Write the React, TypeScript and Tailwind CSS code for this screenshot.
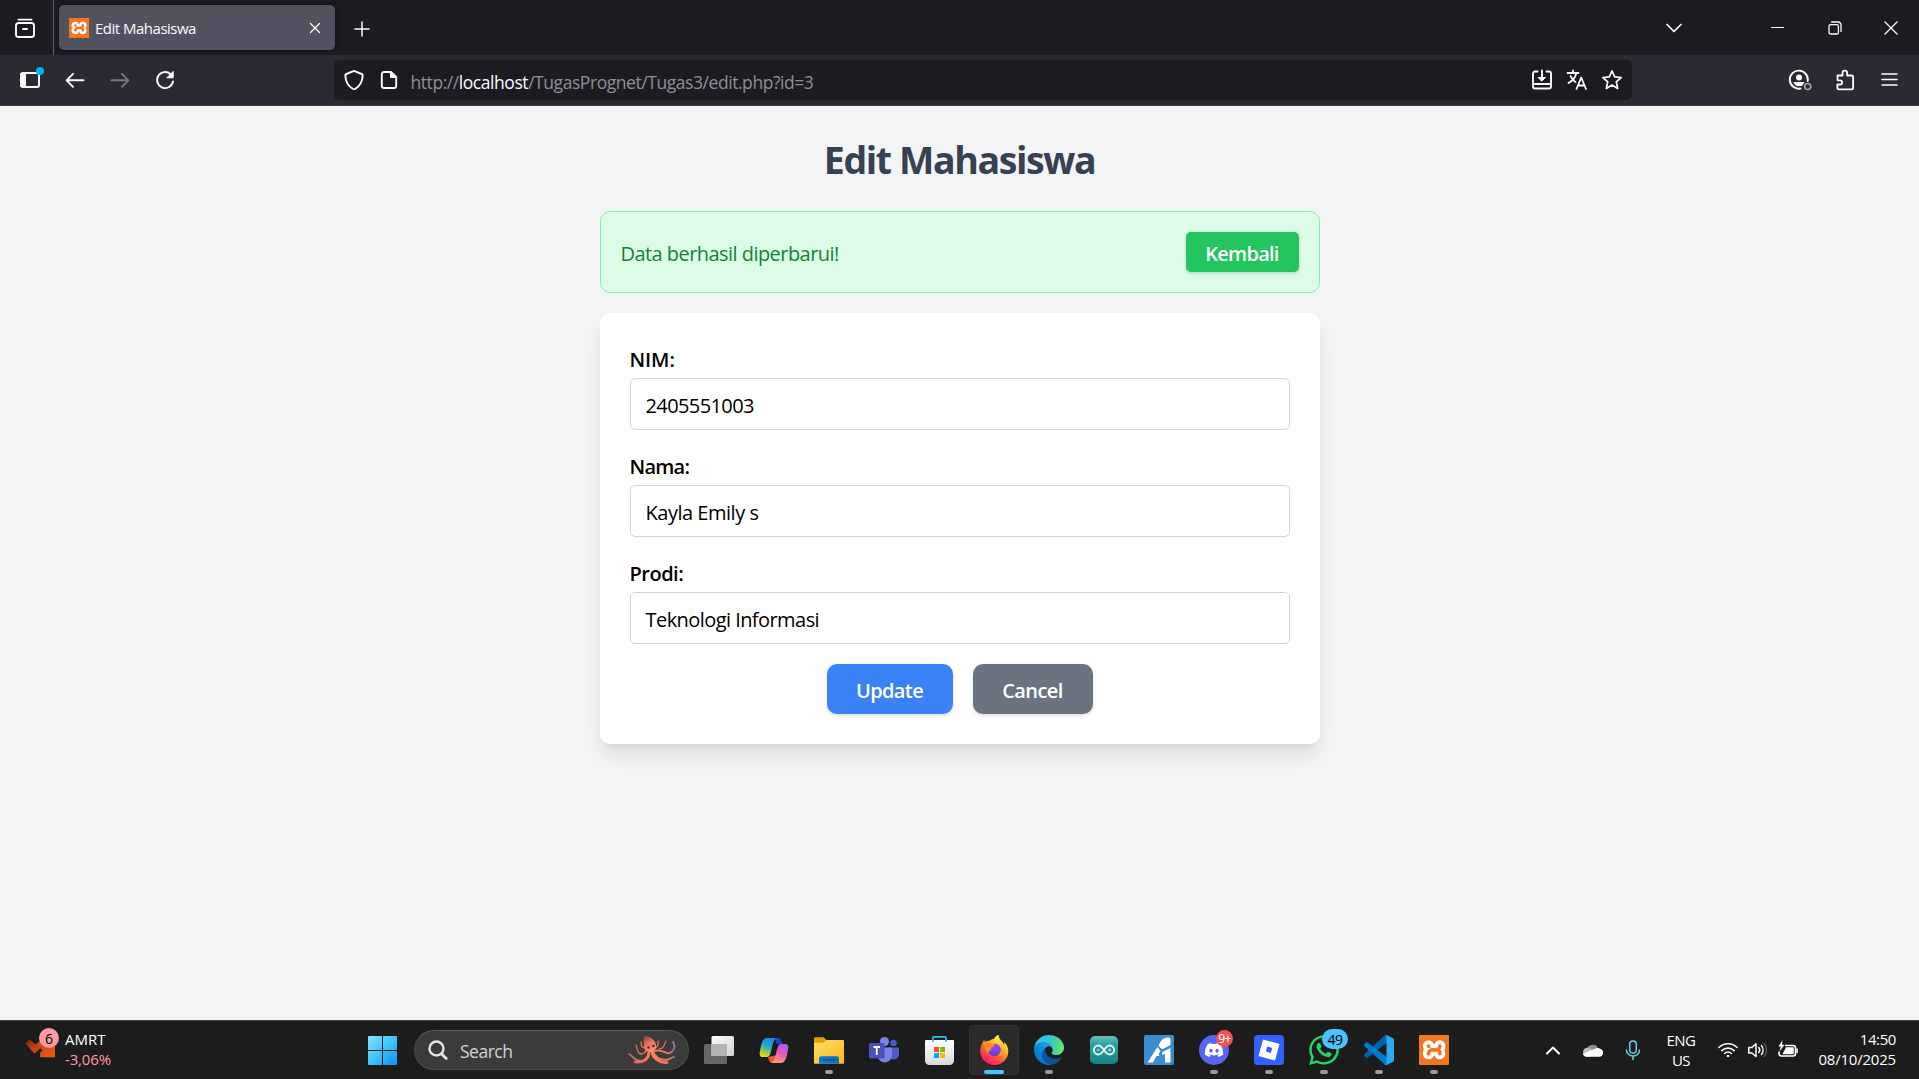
import React from "react";
import { FaDiscord, FaWhatsapp } from "react-icons/fa";
import { SiXampp } from "react-icons/si";

type Kids = { children?: React.ReactNode };

function Line({ children, s = 20, w = 1.5, className = "text-[#fbfbfe]" }: Kids & { s?: number; w?: number; className?: string }) {
  return (
    <svg width={s} height={s} viewBox={`0 0 ${s} ${s}`} fill="none" stroke="currentColor" strokeWidth={w} strokeLinecap="round" strokeLinejoin="round" className={className}>
      {children}
    </svg>
  );
}

function Xampp({ className }: { className: string }) {
  return (
    <span className={"flex items-center justify-center bg-white rounded-[2px] overflow-hidden " + className}>
      <SiXampp className="w-full h-full scale-[1.03] text-[#f37623]" />
    </span>
  );
}

function TabStrip() {
  return (
    <div className="flex h-[55px] items-center bg-[#1c1b22]">
      <div className="flex w-[50px] justify-center pt-[2px]">
        <Line s={22} w={1.9}>
          <path d="M4.5 1.6h13" />
          <rect x="2" y="5" width="18" height="14" rx="2.6" />
          <path d="M9 11h4" />
        </Line>
      </div>
      <div className="ml-[3px] h-full w-px bg-[#5b5b66]" />
      <div className="ml-[5px] flex h-[45px] w-[276px] items-center rounded-[5px] bg-[#52525e] pl-[10px] pr-[14px] shadow-[0_0_4px_rgba(0,0,0,0.5)]">
        <Xampp className="h-[20px] w-[20px]" />
        <span className="ml-[6px] pt-px text-[15px] tracking-[-0.5px] text-[#fbfbfe]">Edit Mahasiswa</span>
        <Line s={12} w={1.3} className="ml-auto text-[#fbfbfe]">
          <path d="M1.5 1.5l9 9M10.5 1.5l-9 9" />
        </Line>
      </div>
      <div className="ml-[18.5px] pt-[2px]">
        <Line s={16} w={1.5}>
          <path d="M8 1v14M1 8h14" />
        </Line>
      </div>
      <div className="ml-auto flex items-center">
        <div className="flex w-[40px] justify-center">
          <Line s={18} w={1.7}>
            <path d="M2 5.5l7 7 7-7" />
          </Line>
        </div>
        <div className="ml-[55px] flex w-[57px] justify-center">
          <Line s={13} w={1.2}>
            <path d="M0.5 6.5h12" />
          </Line>
        </div>
        <div className="flex w-[57px] justify-center">
          <Line s={14} w={1.3}>
            <rect x="1" y="3.6" width="9.4" height="9.4" rx="1.6" />
            <path d="M3.6 1h6.2a3.2 3.2 0 0 1 3.2 3.2v6.2" />
          </Line>
        </div>
        <div className="flex w-[56px] justify-center">
          <Line s={14} w={1.3}>
            <path d="M1 1l12 12M13 1L1 13" />
          </Line>
        </div>
      </div>
    </div>
  );
}

function Cell({ children, className }: Kids & { className: string }) {
  return <div className={"flex shrink-0 items-center justify-center " + className}>{children}</div>;
}

function Toolbar() {
  return (
    <div className="flex h-[51px] items-center border-b border-[#3a3942] bg-[#2b2a33] pl-[7.5px] pr-[6.5px]">
      <Cell className="relative w-[45px]">
        <Line s={22} w={1.9}>
          <rect x="2" y="4" width="18" height="14" rx="2" />
          <path d="M2 5h4v12H2z" fill="currentColor" />
        </Line>
        <span className="absolute left-[28.5px] top-[-2.5px] h-[8px] w-[8px] rounded-full bg-[#00b3f4]" />
      </Cell>
      <Cell className="w-[45px]">
        <Line w={1.9}>
          <path d="M18.5 10.3H2M8 3.8L1.6 10.3 8 16.8" />
        </Line>
      </Cell>
      <Cell className="w-[45px]">
        <Line w={1.9} className="text-[#77767e]">
          <path d="M1.5 10.3H18M12 3.8l6.4 6.5-6.4 6.5" />
        </Line>
      </Cell>
      <Cell className="w-[45px]">
        <Line w={1.9}>
          <path d="M18 11.5A8 8 0 1 1 15.6 4.2" />
          <path d="M18.2 1.8v6h-6z" fill="currentColor" strokeWidth="1" />
        </Line>
      </Cell>
      <div className="ml-[146.5px] flex h-[40px] w-[1298px] items-center rounded-[5px] bg-[#1c1b22] px-[2.5px]">
        <Cell className="w-[35px]">
          <Line s={22} w={1.9}>
            <path d="M11 1.900L18.600 5c1 .4 1.200.8 1.100 1.800-.4 6.200-2.800 10.400-7.500 13a2.400 2.400 0 0 1-2.400 0C5.100 17.200 2.700 13 2.300 6.800c-.1-1 .1-1.400 1.100-1.800z" />
          </Line>
        </Cell>
        <Cell className="w-[35px]">
          <Line w={1.9}>
            <path d="M12 2H5a2.200 2.200 0 0 0-2.200 2.200v11.600A2.200 2.200 0 0 0 5 18h10a2.200 2.200 0 0 0 2.200-2.200V7z" />
            <path d="M11.500 2v5.500h5.700z" fill="currentColor" strokeWidth="1" />
          </Line>
        </Cell>
        <span className="ml-[4px] pt-[4.5px] text-[17.5px] tracking-[-0.44px] text-[#8f8f95]">
          http://<span className="text-[#fbfbfe]">localhost</span>/TugasPrognet/Tugas3/edit.php?id=3
        </span>
        <div className="ml-auto flex">
          <Cell className="w-[35px]">
            <Line s={22} w={1.9}>
              <path d="M6.500 2.500H4A2 2 0 0 0 2 4.500v13A2 2 0 0 0 4 19.500h14a2 2 0 0 0 2-2v-13a2 2 0 0 0-2-2h-2.500M2 15h18M11 1.500v8" />
              <path d="M7.500 8.500h7L11 12z" fill="currentColor" strokeWidth="1" />
            </Line>
          </Cell>
          <Cell className="w-[35px]">
            <Line s={22} w={1.8}>
              <path d="M1.500 4h11M7 1.500V4M10.300 4C9.500 8 6.500 12 2.500 14M4.500 7c1 2.600 2.800 4.600 5 6" />
              <path d="M10.500 20l4.700-11.500L20 20M12 16.500h6.400" />
            </Line>
          </Cell>
          <Cell className="w-[35px]">
            <Line s={22} w={1.7}>
              <path d="M11 1.800l2.700 6 6.400.7-4.800 4.400 1.400 6.500L11 16.100l-5.700 3.300 1.400-6.500L1.900 8.500l6.400-.7z" />
            </Line>
          </Cell>
        </div>
      </div>
      <div className="ml-auto flex">
        <Cell className="w-[45px]">
          <Line s={24} w={1.9}>
            <path d="M19.700 13A9 9 0 1 0 12.500 20.500" />
            <circle cx="11" cy="9.500" r="3" fill="currentColor" stroke="none" />
            <path d="M5.500 14h11l-1.500 2.500-1 1.500H9c-1.600-.4-3-2-3.500-4z" fill="currentColor" stroke="none" />
            <circle cx="19.700" cy="18.500" r="3" stroke="#a5a5ab" strokeWidth="1.600" />
          </Line>
        </Cell>
        <Cell className="w-[45px]">
          <Line s={22} w={1.8}>
            <path d="M3.500 6.500h5V4a2.300 2.300 0 0 1 4.600 0v2.500h4.400a1.600 1.600 0 0 1 1.600 1.600v10.700a1.600 1.600 0 0 1-1.600 1.600H5a1.600 1.600 0 0 1-1.600-1.600V15.500H6a2 2 0 0 0 0-4.200H3.500z" />
          </Line>
        </Cell>
        <Cell className="w-[45px]">
          <Line w={1.5}>
            <path d="M2 4h15M2 9.500h15M2 15h15" />
          </Line>
        </Cell>
      </div>
    </div>
  );
}

const fields = [
  { label: "NIM:", value: "2405551003", l: "tracking-[-0.1px]", v: "tracking-[-0.6px]" },
  { label: "Nama:", value: "Kayla Emily s", l: "tracking-[-0.75px]", v: "tracking-[-0.48px]" },
  { label: "Prodi:", value: "Teknologi Informasi", l: "tracking-[-0.5px]", v: "tracking-[-0.56px]" },
];

function Page() {
  return (
    <main className="flex-1 bg-[#f3f4f6] pt-[30px] text-[20px]">
      <h1 className="h-[45px] pt-px text-center text-[37.5px] font-bold leading-[45px] tracking-[-1.4px] text-[#374151]">Edit Mahasiswa</h1>
      <div className="mx-auto mt-[30px] flex h-[82px] w-[720px] items-center justify-between rounded-[10px] border border-[#86efac] bg-[#dcfce7] px-[20px]">
        <span className="pt-[4px] tracking-[-0.55px] text-[#15803d]">Data berhasil diperbarui!</span>
        <button className="h-[40px] w-[113px] rounded-[5px] bg-[#22c55e] pt-[4px] font-semibold tracking-[-0.75px] text-white shadow-[0_1.25px_3.75px_rgba(0,0,0,0.1),0_1.25px_2.5px_-1.25px_rgba(0,0,0,0.1)]">Kembali</button>
      </div>
      <form className="mx-auto mt-[20px] h-[431px] w-[720px] rounded-[10px] bg-white p-[30px] shadow-[0_12.5px_18.75px_-3.75px_rgba(0,0,0,0.1),0_5px_7.5px_-5px_rgba(0,0,0,0.1)]">
        {fields.map((f) => (
          <div key={f.label} className="mb-[20px]">
            <div className={"h-[35px] pt-[2px] font-semibold leading-[30px] text-black " + f.l}>{f.label}</div>
            <div className={"flex h-[52px] items-center rounded-[5px] border border-[#d1d5db] px-[15px] pt-[4px] text-black " + f.v}>{f.value}</div>
          </div>
        ))}
        <div className="flex justify-center gap-[20px] text-white">
          <div className="h-[50px] w-[126px] rounded-[10px] bg-[#3b82f6] pt-[2px] text-center font-semibold leading-[50px] tracking-[-0.6px] shadow-[0_1.25px_3.75px_rgba(0,0,0,0.1),0_1.25px_2.5px_-1.25px_rgba(0,0,0,0.1)]">Update</div>
          <div className="h-[50px] w-[120px] rounded-[10px] bg-[#6b7280] pt-[2px] text-center font-semibold leading-[50px] tracking-[-0.6px] shadow-[0_1.25px_3.75px_rgba(0,0,0,0.1),0_1.25px_2.5px_-1.25px_rgba(0,0,0,0.1)]">Cancel</div>
        </div>
      </form>
    </main>
  );
}

function Octopus() {
  return (
    <svg width="50" height="30" viewBox="0 0 50 30" fill="none" strokeLinecap="round">
      <defs>
        <linearGradient id="oc" x1="0" x2="50" y1="0" y2="0" gradientUnits="userSpaceOnUse">
          <stop offset="0" stopColor="#7d6a9a" /><stop offset=".22" stopColor="#e2735c" /><stop offset=".5" stopColor="#ff8258" /><stop offset=".82" stopColor="#e8705e" /><stop offset="1" stopColor="#5b76b4" />
        </linearGradient>
        <linearGradient id="oh" x1="17" x2="26" y1="1" y2="16" gradientUnits="userSpaceOnUse">
          <stop offset="0" stopColor="#7b3f4e" /><stop offset=".5" stopColor="#e8735a" /><stop offset="1" stopColor="#ff9468" />
        </linearGradient>
      </defs>
      <g stroke="url(#oc)">
        <path d="M22 17c-1 7-6 10-11 8.500-4-1-5-4-9-6.500" strokeWidth="2" />
        <path d="M22 17c0 7-5 11-14 10" strokeWidth="2.600" />
        <path d="M20 15c-3 4-6 5-8 3s-2-5-3-8" strokeWidth="1.300" />
        <path d="M18 13c-3 0-4-2-4-6" strokeWidth="1.200" />
        <path d="M26 16c2 7 8 9 13 9 4 0 5-3 8-3" strokeWidth="2" />
        <path d="M25 17c1 6 7 11 15 10.500" strokeWidth="2.800" />
        <path d="M28 16c6-3 11 4 15 2s6-7 3-11" strokeWidth="1.900" />
        <path d="M27 13c3 0 5-3 4-7M32 14c4 0 5-3 7-8" strokeWidth="1.100" />
      </g>
      <path d="M17 0.500c5 .5 11 4 12 9 .7 4-1 7-5 7.500-4 .4-7-2-7-6 0-3-1-6 0-10.500z" fill="url(#oh)" />
      <circle cx="21.500" cy="12.500" r="1.200" fill="#3c2540" /><circle cx="26.500" cy="11" r="1.200" fill="#3c2540" />
    </svg>
  );
}

const TaskView = () => (
  <svg width="30" height="28" viewBox="0 0 30 28">
    <defs><linearGradient id="tv" x2="1" y2="1"><stop stopColor="#fff" /><stop offset="1" stopColor="#d0d0d0" /></linearGradient></defs>
    <rect x="0" y="8" width="23" height="20" rx="1.500" fill="#666" />
    <rect x="7.500" y="0" width="22.500" height="20" rx="1.500" fill="url(#tv)" />
    <path d="M7.500 8H23v12H7.500z" fill="#b4b4b4" />
  </svg>
);

const Copilot = () => (
  <svg width="30" height="27" viewBox="0 0 30 27">
    <defs>
      <linearGradient id="cp1" x1=".6" x2=".2" y1="0" y2="1"><stop stopColor="#1d86ec" /><stop offset=".45" stopColor="#22b0c8" /><stop offset=".75" stopColor="#9ccf3a" /><stop offset="1" stopColor="#ffd21c" /></linearGradient>
      <linearGradient id="cp2" x1=".7" x2=".3" y1="0" y2="1"><stop stopColor="#a55cf0" /><stop offset=".5" stopColor="#e85cb0" /><stop offset="1" stopColor="#ffa06c" /></linearGradient>
    </defs>
    <path d="M9 20c1 4 2 6 5 6h6c-3-1-3-4-2-8z" fill="#f0563c" />
    <path d="M16 1h3c3 0 3.500 3 4.500 6h-6z" fill="#1947c4" />
    <path d="M8 1h10c-3 1-4 5-5 9-1 5-2 10-5 10H4c-3 0-4-2-3-6 1-5 2-13 7-13z" fill="url(#cp1)" />
    <path d="M22 26H12c3-1 4-5 5-9 1-5 2-10 5-10h4c3 0 4 2 3 6-1 5-2 13-7 13z" fill="url(#cp2)" />
  </svg>
);

const Folder = () => (
  <svg width="30" height="27" viewBox="0 0 30 27">
    <defs><linearGradient id="fo" x2="1" y2="1"><stop stopColor="#ffdc6c" /><stop offset="1" stopColor="#fbb917" /></linearGradient><linearGradient id="fb" x2="1" y2="0"><stop stopColor="#0f7bd4" /><stop offset="1" stopColor="#1a66b8" /></linearGradient></defs>
    <path d="M0 1.500Q0 .3 1.200.3H9.500L13 3.500V9H0z" fill="#e2a100" />
    <path d="M0 5.800h9L12.500 3H29q1 0 1 1v22q0 .8-1 .8H1q-1 0-1-1z" fill="url(#fo)" />
    <path d="M5 26.800V21.500q0-2.300 2.300-2.300h15.400q2.300 0 2.300 2.300v5.300z" fill="url(#fb)" />
    <path d="M9 22.900h12" stroke="#0b4a8c" strokeWidth="1.200" strokeLinecap="round" />
  </svg>
);

const Teams = () => (
  <svg width="30" height="27" viewBox="0 0 30 27">
    <circle cx="24.500" cy="6" r="3.200" fill="#5059c9" /><circle cx="15.500" cy="4.500" r="4.500" fill="#7b83eb" />
    <path d="M20 10.500h9q1 0 1 1V17a5.500 5.500 0 0 1-8 5z" fill="#5059c9" />
    <path d="M9 10.500h13q1 0 1 1V19a7.300 7.300 0 0 1-14.500 0z" fill="#7b83eb" />
    <rect x="0" y="6" width="15.500" height="15.500" rx="1.500" fill="#4a52ba" />
    <path d="M4.500 10h6.500M7.750 10v8" stroke="#fff" strokeWidth="1.800" />
  </svg>
);

const Store = () => (
  <svg width="29" height="29" viewBox="0 0 29 29">
    <defs><linearGradient id="st" x2="0" y2="1"><stop stopColor="#fff" /><stop offset="1" stopColor="#d9d9d9" /></linearGradient></defs>
    <path d="M0 5q0-1 1-1h27q1 0 1 1v19.500a4.500 4.500 0 0 1-4.500 4.500h-20A4.500 4.500 0 0 1 0 24.500z" fill="url(#st)" />
    <path d="M7.900 6V1.900q0-1 1-1h11.200q1 0 1 1V6" fill="none" stroke="#2cc0f2" strokeWidth="1.700" />
    <path d="M9 11h5v5H9z" fill="#f25022" /><path d="M15 11h5v5h-5z" fill="#7fba00" /><path d="M9 17h5v5H9z" fill="#00a4ef" /><path d="M15 17h5v5h-5z" fill="#ffb900" />
  </svg>
);

const Firefox = () => (
  <svg width="29" height="30" viewBox="0 0 29 30">
    <defs>
      <linearGradient id="ff" x1=".8" x2=".2" y1=".05" y2="1"><stop stopColor="#fff04a" /><stop offset=".35" stopColor="#ffb02a" /><stop offset=".62" stopColor="#ff5a38" /><stop offset=".85" stopColor="#ff2260" /><stop offset="1" stopColor="#e31587" /></linearGradient>
      <radialGradient id="fp" cx=".5" cy=".3" r=".7"><stop stopColor="#a346f2" /><stop offset="1" stopColor="#5b3fd0" /></radialGradient>
      <linearGradient id="fy" x2="0" y2="1"><stop stopColor="#fff44f" /><stop offset="1" stopColor="#ff8a1c" /></linearGradient>
    </defs>
    <path d="M3 7c.3-1 .8-1.800 1.400-2.300 0 1 .3 1.800.6 2.300 1.500-1 3-1.400 4.500-1.200C11 4.500 12 4 14 4c1-2 2.500-3.400 4.500-4 0 3.500 2 5 4 7 .5 1 1.200 2 1.400 3 .5-1 .5-2 .2-3.200 3 3 4.400 6.500 4.200 10A14 14 0 0 1 .3 15.500C.3 12.500 1.400 9.500 3 7z" fill="url(#ff)" />
    <circle cx="14.500" cy="15" r="6.300" fill="url(#fp)" />
    <path d="M5 8c2-1.500 4.500-1 6 .8 1.500.2 3 .3 3.800 1-.3 1.700-2.800 2.200-3.600 3-.4.700.2 2 .2 2.700-2.200-.8-3 .7-2.300 2.600-2.600-1-4.800-4.600-4.100-10.100z" fill="#ff8a2a" />
    <path d="M18.500 0c0 3.500 2 5 4 7.500 2.500 3 2.500 8 0 11-1.300 1.500-3.400 2.300-5 2 4-2.500 4.500-7 2.400-9.800C18.500 9 15.500 8.500 14 4c1-2 2.500-3.400 4.500-4z" fill="url(#fy)" opacity=".85" />
  </svg>
);

const Edge = () => (
  <svg width="30" height="30" viewBox="0 0 256 256">
    <defs>
      <linearGradient id="e1" x1="63" x2="241" y1="177" y2="177" gradientUnits="userSpaceOnUse"><stop stopColor="#0c59a4" /><stop offset="1" stopColor="#114a8b" /></linearGradient>
      <linearGradient id="e2" x1="157" x2="46" y1="100" y2="221" gradientUnits="userSpaceOnUse"><stop stopColor="#1b9de2" /><stop offset=".3" stopColor="#1595df" /><stop offset=".7" stopColor="#0680d7" /><stop offset="1" stopColor="#0078d4" /></linearGradient>
      <linearGradient id="e3" x1="20" x2="250" y1="60" y2="110" gradientUnits="userSpaceOnUse"><stop stopColor="#35c1f1" /><stop offset=".4" stopColor="#2fc5dc" /><stop offset=".75" stopColor="#4ad68f" /><stop offset="1" stopColor="#66eb6e" /></linearGradient>
    </defs>
    <path fill="url(#e1)" d="M231.070 190.540c-3.380 1.770-6.910 3.330-10.530 4.670-11.500 4.300-23.670 6.510-35.960 6.480-47.370 0-88.630-32.550-88.630-74.420.12-11.420 6.400-21.890 16.400-27.380-42.850 1.800-53.860 46.450-53.860 72.600 0 74.060 68.150 81.500 82.860 81.500 7.900 0 19.850-2.300 27.080-4.600l1.270-.4a128.390 128.390 0 0 0 66.580-52.650 4.100 4.100 0 0 0-5.210-5.800z" />
    <path fill="url(#e2)" d="M105.730 241.420a79.200 79.200 0 0 1-22.720-21.320 80.720 80.720 0 0 1 29.500-120.210c3.120-1.470 8.460-4.120 15.580-4a32.350 32.350 0 0 1 25.660 13 31.920 31.920 0 0 1 6.360 18.690c0-.2 24.450-79.610-80.180-79.610-43.900 0-80 41.660-80 78.210-.1 19.340 4.080 38.500 12.310 56 27.600 58.760 94.700 87.600 156.300 67.240a75.950 75.950 0 0 1-62.810-8z" />
    <path fill="url(#e3)" d="M152.320 148.860c-.82 1.050-3.320 2.500-3.320 5.660 0 2.610 1.700 5.120 4.720 7.230 14.380 10 41.490 8.680 41.560 8.680a59.550 59.550 0 0 0 30.270-8.350 61.380 61.380 0 0 0 30.430-52.880c.26-22.410-8-37.310-11.340-43.910C223.400 23.880 177.720 0 128 0A128 128 0 0 0 0 126.200c.48-36.540 36.800-66.050 80-66.050 3.500 0 23.460.34 42 10.070 16.340 8.580 24.900 18.940 30.850 29.210 6.180 10.670 7.280 24.150 7.280 29.520 0 5.370-2.740 13.330-7.810 19.910z" />
  </svg>
);

const Arduino = () => (
  <svg width="28" height="28" viewBox="0 0 28 28" fill="none">
    <defs><linearGradient id="ar" x2="0" y2="1"><stop stopColor="#6cc0c0" /><stop offset=".3" stopColor="#2a9fa3" /><stop offset="1" stopColor="#148487" /></linearGradient></defs>
    <rect width="28" height="28" rx="5" fill="url(#ar)" />
    <path d="M14 14c-2-3-3.500-4.500-5.700-4.500a4.500 4.500 0 0 0 0 9c2.200 0 3.700-1.500 5.700-4.500s3.500-4.500 5.700-4.500a4.500 4.500 0 0 1 0 9C17.500 18.500 16 17 14 14z" stroke="#e6f4f4" strokeWidth="1.800" />
    <path d="M7 14h2.600M18.400 14H21M19.700 12.700v2.600" stroke="#e6f4f4" strokeWidth="1" />
  </svg>
);

const BlueA = () => (
  <svg width="30" height="30" viewBox="0 0 30 30">
    <rect width="30" height="30" rx="2" fill="#3b8bd0" />
    <path d="M17 6q3-4 8-3.500 1.500.3 1.500 2v5.500L20 13.500q-2 1-3.500-.5L14.500 10.500z" fill="#fff" />
    <path d="M13.500 12l3 4-2 3.500 1 1.500h-3L9 27.500H3.500z" fill="#fff" />
    <path d="M26.500 13v14.500h-5.500V19l-3 1 .5-3z" fill="#fff" />
  </svg>
);

const Roblox = () => (
  <svg width="30" height="30" viewBox="0 0 30 30">
    <rect width="30" height="30" rx="3.500" fill="#335fff" />
    <path d="M9 4.500l16.500 4.400L21 25.500 4.500 21zM13.200 11.600l-1.300 5 5 1.300 1.300-5z" fill="#fff" fillRule="evenodd" />
  </svg>
);

const VSCode = () => (
  <svg width="30" height="30" viewBox="0 0 100 100">
    <path fill="#0065A9" d="M96.461 10.796L75.857.876C73.472-.273 70.622.212 68.750 2.083L1.299 63.583c-1.815 1.654-1.813 4.511.004 6.162l5.510 5.009c1.485 1.350 3.722 1.450 5.321.237L93.361 13.370C96.086 11.303 100 13.246 100 16.667v-.24c0-2.400-1.375-4.589-3.539-5.631z" />
    <path fill="#007ACC" d="M96.461 89.204L75.857 99.125c-2.385 1.148-5.235.663-7.107-1.208L1.299 36.417c-1.815-1.654-1.813-4.511.004-6.162l5.510-5.009c1.485-1.350 3.722-1.450 5.321-.237L93.361 86.630C96.086 88.697 100 86.754 100 83.333v.24c0 2.400-1.375 4.589-3.539 5.631z" />
    <path fill="#29aaf5" d="M75.858 99.126c-2.386 1.148-5.236.662-7.108-1.209C71.056 100.223 75 98.590 75 95.328V4.672C75 1.410 71.056-.223 68.750 2.083 70.622.211 73.472-.274 75.858.874l20.601 9.907C98.623 11.822 100 14.011 100 16.413v67.174c0 2.402-1.377 4.592-3.541 5.633z" />
  </svg>
);

function TaskButton({ children, active, running }: Kids & { active?: boolean; running?: boolean }) {
  return (
    <div className="flex h-full w-[55px] items-center justify-center">
      <div className={"relative flex h-[50px] w-[50px] items-center justify-center rounded-[5px] " + (active ? "bg-[#2a2a2a] ring-1 ring-inset ring-[#333333]" : "")}>
        {children}
        {active && <span className="absolute bottom-[1px] left-[15px] h-[4px] w-[20px] rounded-full bg-[#4cc2ff]" />}
        {running && <span className="absolute bottom-[1px] left-[21px] h-[4px] w-[8px] rounded-full bg-[#9a9a9a]" />}
      </div>
    </div>
  );
}

function Taskbar() {
  return (
    <div className="flex h-[59px] items-center border-t border-[#3c4245] bg-[#1c1c1c] text-[15px] text-white">
      <div className="flex w-[355px] items-center pl-[25px]">
        <div className="relative h-[40px] w-[32px]">
          <svg width="32" height="40" viewBox="0 0 32 40">
            <defs><linearGradient id="wd" x1="0" x2="1" y1="0" y2=".6"><stop stopColor="#7c1d12" /><stop offset=".4" stopColor="#c8401a" /><stop offset="1" stopColor="#e85a10" /></linearGradient></defs>
            <path d="M.5 13.500l4-4 6 5 6-5 8 7 5.500-5v14.800q0 1-1 1H16q-1 0-1-1v-3.500l2.500-2.500-2.500-2-5.500 5.500z" fill="url(#wd)" />
          </svg>
          <span className="absolute left-[14px] top-[-2px] flex h-[20px] w-[20px] items-center justify-center rounded-full bg-[#ff99a4] text-[14px] text-black">6</span>
        </div>
        <div className="ml-[8px] pb-[2px] leading-[20px]">
          <div>AMRT</div>
          <div className="tracking-[-0.14px] text-[#ff99a4]">-3,06%</div>
        </div>
      </div>
      <Cell className="w-[55px]">
        <svg width="29" height="29" viewBox="0 0 29 29">
          <defs><linearGradient id="wn" x1="0" y1="0" x2="29" y2="29" gradientUnits="userSpaceOnUse"><stop stopColor="#8be0ff" /><stop offset=".5" stopColor="#40c4fb" /><stop offset="1" stopColor="#0a8cf5" /></linearGradient></defs>
          <path d="M0 1q0-1 1-1h13v14H0zM15 0h13q1 0 1 1v13H15zM0 15h14v14H1q-1 0-1-1zM15 15h14v13q0 1-1 1H15z" fill="url(#wn)" />
        </svg>
      </Cell>
      <div className="ml-[4px] mr-[2.5px] flex h-[40px] w-[275px] items-center rounded-full border border-[#4a4a4a] border-t-[#5c5c5c] bg-[#3b3b3b] pl-[13px] pr-[11px]">
        <Line w={2.4} className="text-[#e3e3e3]">
          <circle cx="8.500" cy="8.500" r="7" />
          <path d="M13.700 14l4.500 4.500" strokeWidth="2.800" />
        </Line>
        <span className="ml-[12px] pt-[2px] text-[17.5px] tracking-[-0.5px] text-[#d2d2d2]">Search</span>
        <div className="ml-auto"><Octopus /></div>
      </div>
      <TaskButton><TaskView /></TaskButton>
      <TaskButton><Copilot /></TaskButton>
      <TaskButton running><Folder /></TaskButton>
      <TaskButton><Teams /></TaskButton>
      <TaskButton><Store /></TaskButton>
      <TaskButton active><Firefox /></TaskButton>
      <TaskButton running><Edge /></TaskButton>
      <TaskButton><Arduino /></TaskButton>
      <TaskButton><BlueA /></TaskButton>
      <TaskButton running>
        <span className="flex h-[30px] w-[30px] items-center justify-center rounded-full bg-[#5865f2]"><FaDiscord className="h-[20px] w-[20px]" /></span>
        <span className="absolute left-[27px] top-[5px] flex h-[17px] w-[17px] items-center justify-center rounded-full bg-[#f05252] text-[12px] tracking-[-0.5px]">9+</span>
      </TaskButton>
      <TaskButton running><Roblox /></TaskButton>
      <TaskButton running>
        <FaWhatsapp className="h-[34px] w-[34px] text-[#25d366]" />
        <span className="absolute left-[23px] top-[4px] flex h-[20px] w-[26px] items-center justify-center rounded-full bg-[#4cc2ff] text-[14px] tracking-[-0.5px] text-black">49</span>
      </TaskButton>
      <TaskButton running><VSCode /></TaskButton>
      <TaskButton running><Xampp className="h-[30px] w-[30px]" /></TaskButton>
      <div className="ml-auto flex items-center pr-[23px]">
        <Cell className="w-[40px]">
          <Line s={18} w={2}><path d="M3 12.500l6-6 6 6" /></Line>
        </Cell>
        <Cell className="w-[40px]">
          <svg width="20" height="13" viewBox="0 0 20 13">
            <path d="M4 5a6 6 0 0 1 11-1l-3 5z" fill="#8c8c8c" />
            <path d="M4.500 12.800A4.300 4.300 0 0 1 4.500 3.800c2 0 3 .6 4 1.500l8 6z" fill="#bdbdbd" />
            <path d="M3 12.800c-2-.5-3-1.800-3-3l13-5.500c1.500-.6 3.500-.5 4 .5 2 .3 3 2 3 4a4 4 0 0 1-4 4z" fill="#fff" />
          </svg>
        </Cell>
        <Cell className="w-[40px]">
          <Line s={20} w={1.5} className="text-[#76cde4]">
            <rect x="6.700" y="1" width="6.600" height="12" rx="3.300" />
            <path d="M3.500 10a6.500 6 0 0 0 13 0M10 16v3.500" />
          </Line>
        </Cell>
        <div className="w-[56px] text-center leading-[20px]">
          <div className="tracking-[-0.5px]">ENG</div>
          <div className="tracking-[-0.5px]">US</div>
        </div>
        <Cell className="ml-[4px] w-[30px]">
          <Line w={1.6}>
            <path d="M.9 7.500a13 13 0 0 1 18.200 0M3.800 10.600a9 9 0 0 1 12.400 0M6.600 13.500a5 5 0 0 1 6.800 0" />
            <circle cx="10" cy="16" r="1.300" fill="currentColor" stroke="none" />
          </Line>
        </Cell>
        <Cell className="w-[30px]">
          <Line w={1.500}>
            <path d="M.8 7.500h3L8 3.800v12.700L3.800 13h-3z" />
            <path d="M10.800 7.500a4 4 0 0 1 0 5M13.400 5.500a7 7 0 0 1 0 9" />
            <path d="M16.200 3.500a10 10 0 0 1 0 13" stroke="#555" />
          </Line>
        </Cell>
        <Cell className="w-[30px]">
          <svg width="20" height="20" viewBox="0 0 20 20">
            <path d="M7 5.500h8a2.500 2.500 0 0 1 2.500 2.500v5.500a2.500 2.500 0 0 1-2.500 2.500H3.500A2.500 2.500 0 0 1 1 13.500v-2" fill="none" stroke="#fff" strokeWidth="1.600" />
            <path d="M18.300 8.500h1.500v4.500h-1.500zM8 7.300h6.500q1.300 0 1.300 1.300v4.300q0 1.300-1.300 1.300H4.500z" fill="#fff" />
            <path d="M4.500 0L.5 6.500h2.300L1.500 11.500 6.500 4.800H4z" fill="#fff" />
          </svg>
        </Cell>
        <div className="w-[93px] pb-[2px] text-right leading-[20px]">
          <div className="tracking-[-0.4px]">14:50</div>
          <div className="tracking-[-0.2px]">08/10/2025</div>
        </div>
      </div>
    </div>
  );
}

export default function App() {
  return (
    <div className="flex h-[1079px] w-[1919px] flex-col overflow-hidden whitespace-nowrap font-['Open_Sans','Noto_Sans',sans-serif]">
      <TabStrip />
      <Toolbar />
      <Page />
      <Taskbar />
    </div>
  );
}
